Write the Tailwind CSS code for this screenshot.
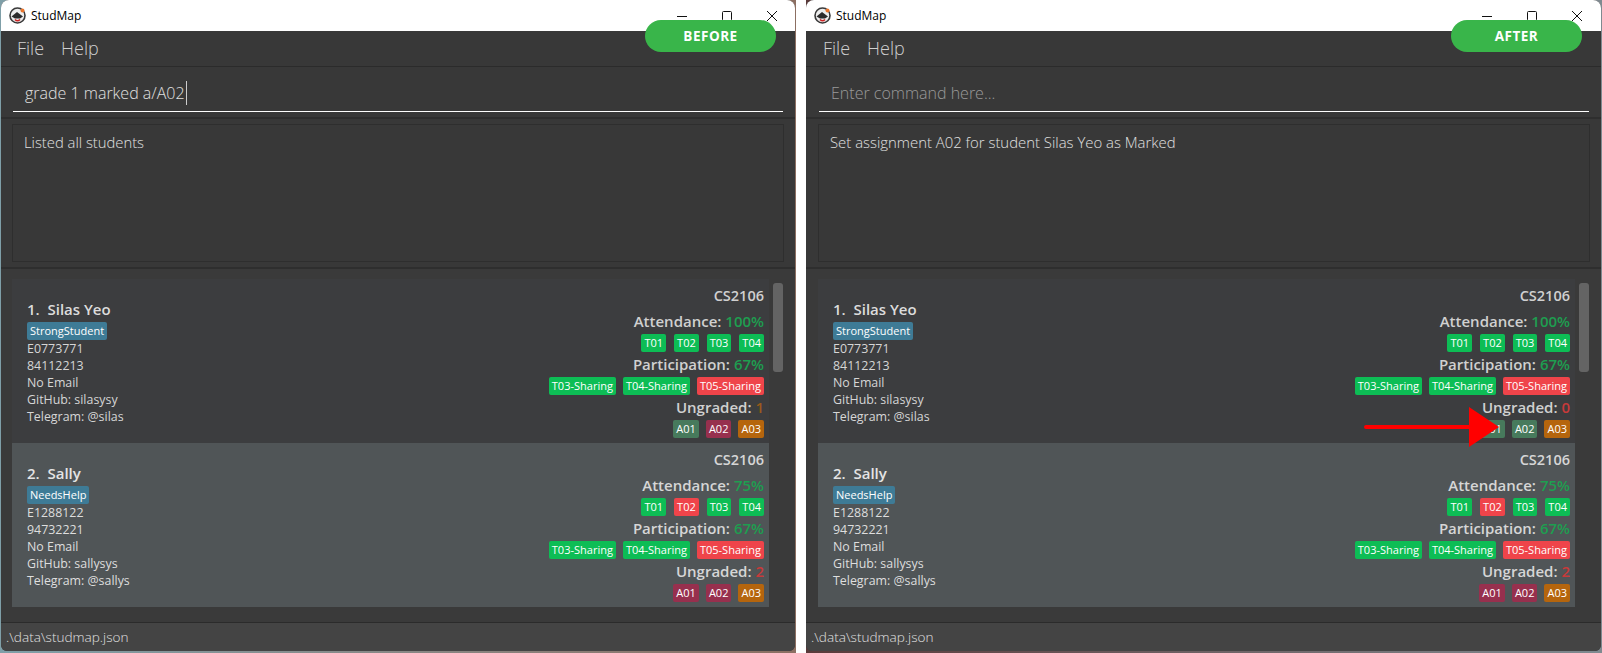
<!DOCTYPE html>
<html>
<head>
<meta charset="utf-8">
<script src="https://cdn.jsdelivr.net/npm/@tailwindcss/browser@4"></script>
</head>
<body class="bg-white overflow-hidden font-['Open_Sans','Noto_Sans',sans-serif]">
<div class="relative flex w-[1602px] h-[653px] gap-[10px] bg-white">

  <!-- LEFT -->
  <div class="relative w-[796px] h-[653px] pl-px pb-[2px] bg-gradient-to-r from-[#7f9fa8] to-[#8c6f62]">
    <div class="flex flex-col h-full w-[794px] rounded-t-[8px] rounded-b-[6px] overflow-hidden bg-[#383838]">
      <div class="flex items-center h-[31px] shrink-0 bg-white pl-[8px]">
        <svg class="w-[17px] h-[17px]" viewBox="0 0 17 17"><circle cx="8.5" cy="8.5" r="7.5" fill="#eee" stroke="#3a3a3a" stroke-width="1.6"/><path d="M2.5 9.5 8 5l6 4.5-3 2H6z" fill="#2b2b2b"/><path d="M6 12.5q2.5 2.5 5 0" fill="none" stroke="#c22" stroke-width="1.6"/><circle cx="13.5" cy="3.5" r="2" fill="#e8742c"/></svg>
        <span class="ml-[5px] text-[12px] text-black">StudMap</span>
        <div class="ml-auto flex items-center">
          <svg class="w-[12px] h-[12px]" viewBox="0 0 12 12"><path d="M1 6.5h10" stroke="#111" stroke-width="1"/></svg>
          <svg class="ml-[33px] w-[12px] h-[12px]" viewBox="0 0 12 12"><rect x="1.5" y="1.5" width="9" height="9" rx="1" fill="none" stroke="#111" stroke-width="1"/></svg>
          <svg class="ml-[33px] mr-[17px] w-[12px] h-[12px]" viewBox="0 0 12 12"><path d="M1 1l10 10M11 1 1 11" stroke="#111" stroke-width="1"/></svg>
        </div>
      </div>
      <div class="flex items-center gap-[17px] h-[36px] shrink-0 pl-[16px] text-[18px] font-light text-[#d0d0d0] border-b border-[#2b2b2b]">
        <span>File</span><span>Help</span>
      </div>
      <div class="h-[52px] shrink-0 px-[12px] pt-[10px] border-b-2 border-[#2e2e2e]">
        <div class="flex items-center h-[35px] pl-[12px] pb-[3px] border-b border-white text-[16px] font-light text-[#e0e0e0]">grade 1 marked a/A02<span class="w-px h-[24px] ml-px bg-[#cccccc]"></span></div>
      </div>
      <div class="h-[150px] shrink-0 px-[11px] pt-[5px] pb-[5px] border-b-2 border-[#2e2e2e]">
        <div class="h-full border border-[#2e2e2e] pl-[11px] pt-[7px] text-[14.8px] font-light leading-[20px] text-[#e0e0e0]">Listed all students</div>
      </div>
      <div class="relative h-[353px] shrink-0 pl-[11px] pt-[10px] overflow-hidden bg-[#3a3a3a]">
        <div class="absolute right-[12px] top-[14px] w-[10px] h-[89px] rounded-[3px] bg-[#646464]"></div>
        <div class="flex justify-between w-[757px] h-[164px] pl-[15px] pr-[5px] bg-[#3c3d3f]">
          <div class="pt-[20px] text-[12.4px] leading-[17px] text-[#d6d6d6]">
            <div class="h-[20px] text-[15px] leading-[20px] font-semibold text-[#dcdcdc]">1.&nbsp; Silas Yeo</div>
            <div class="flex mt-[3px]"><span class="h-[18px] px-[3px] rounded-[2px] bg-[#3e7b96] text-[11px] leading-[18px] text-white">StrongStudent</span></div>
            <div>E0773771</div><div>84112213</div><div>No Email</div><div>GitHub: silasysy</div><div>Telegram: @silas</div>
          </div>
          <div class="flex flex-col items-end pt-[7px] text-[#d0d0d0]">
            <div class="h-[20px] text-[14.5px] leading-[20px] font-semibold">CS2106</div>
            <div class="h-[22px] mt-[4px] text-[15px] leading-[22px] font-semibold">Attendance: <span class="text-[#1e9e50]">100%</span></div>
            <div class="flex gap-[8px] mt-[2px] text-[11px] leading-[18px] text-white">
              <span class="h-[18px] px-[3px] rounded-[2px] bg-[#0dbd55]">T01</span><span class="h-[18px] px-[3px] rounded-[2px] bg-[#0dbd55]">T02</span><span class="h-[18px] px-[3px] rounded-[2px] bg-[#0dbd55]">T03</span><span class="h-[18px] px-[3px] rounded-[2px] bg-[#0dbd55]">T04</span>
            </div>
            <div class="h-[22px] mt-[1px] text-[15px] leading-[22px] font-semibold">Participation: <span class="text-[#1e9e50]">67%</span></div>
            <div class="flex gap-[7px] mt-[2px] text-[11px] leading-[18px] text-white">
              <span class="h-[18px] px-[3px] rounded-[2px] bg-[#0dbd55]">T03-Sharing</span><span class="h-[18px] px-[3px] rounded-[2px] bg-[#0dbd55]">T04-Sharing</span><span class="h-[18px] px-[3px] rounded-[2px] bg-[#ef444a]">T05-Sharing</span>
            </div>
            <div class="h-[22px] mt-[1px] text-[15px] leading-[22px] font-semibold">Ungraded: <span class="text-[#9a5a1a]">1</span></div>
            <div class="flex gap-[7px] mt-[2px] text-[11px] leading-[18px] text-white">
              <span class="h-[18px] px-[3px] rounded-[2px] bg-[#477a5c]">A01</span><span class="h-[18px] px-[3px] rounded-[2px] bg-[#97304e]">A02</span><span class="h-[18px] px-[3px] rounded-[2px] bg-[#b5650d]">A03</span>
            </div>
          </div>
        </div>
        <div class="flex justify-between w-[757px] h-[164px] pl-[15px] pr-[5px] bg-[#505557]">
          <div class="pt-[20px] text-[12.4px] leading-[17px] text-[#dedede]">
            <div class="h-[20px] text-[15px] leading-[20px] font-semibold text-[#e4e4e4]">2.&nbsp; Sally</div>
            <div class="flex mt-[3px]"><span class="h-[18px] px-[3px] rounded-[2px] bg-[#3e7b96] text-[11px] leading-[18px] text-white">NeedsHelp</span></div>
            <div>E1288122</div><div>94732221</div><div>No Email</div><div>GitHub: sallysys</div><div>Telegram: @sallys</div>
          </div>
          <div class="flex flex-col items-end pt-[7px] text-[#d6d6d6]">
            <div class="h-[20px] text-[14.5px] leading-[20px] font-semibold">CS2106</div>
            <div class="h-[22px] mt-[4px] text-[15px] leading-[22px] font-semibold">Attendance: <span class="text-[#1e9e50]">75%</span></div>
            <div class="flex gap-[8px] mt-[2px] text-[11px] leading-[18px] text-white">
              <span class="h-[18px] px-[3px] rounded-[2px] bg-[#0dbd55]">T01</span><span class="h-[18px] px-[3px] rounded-[2px] bg-[#ef444a]">T02</span><span class="h-[18px] px-[3px] rounded-[2px] bg-[#0dbd55]">T03</span><span class="h-[18px] px-[3px] rounded-[2px] bg-[#0dbd55]">T04</span>
            </div>
            <div class="h-[22px] mt-[1px] text-[15px] leading-[22px] font-semibold">Participation: <span class="text-[#1e9e50]">67%</span></div>
            <div class="flex gap-[7px] mt-[2px] text-[11px] leading-[18px] text-white">
              <span class="h-[18px] px-[3px] rounded-[2px] bg-[#0dbd55]">T03-Sharing</span><span class="h-[18px] px-[3px] rounded-[2px] bg-[#0dbd55]">T04-Sharing</span><span class="h-[18px] px-[3px] rounded-[2px] bg-[#ef444a]">T05-Sharing</span>
            </div>
            <div class="h-[22px] mt-[1px] text-[15px] leading-[22px] font-semibold">Ungraded: <span class="text-[#c83a3a]">2</span></div>
            <div class="flex gap-[7px] mt-[2px] text-[11px] leading-[18px] text-white">
              <span class="h-[18px] px-[3px] rounded-[2px] bg-[#97304e]">A01</span><span class="h-[18px] px-[3px] rounded-[2px] bg-[#97304e]">A02</span><span class="h-[18px] px-[3px] rounded-[2px] bg-[#b5650d]">A03</span>
            </div>
          </div>
        </div>
      </div>
      <div class="flex-1 flex items-center pl-[5px] border-t border-[#2b2b2b] bg-[#444444] text-[13.6px] font-light text-[#e0e0e0]">.\data\studmap.json</div>
    </div>
    <div class="absolute left-[645px] top-[20px] flex items-center justify-center w-[131px] h-[32px] rounded-full bg-[#39b54a] text-[13.5px] font-bold tracking-[0.5px] text-white">BEFORE</div>
  </div>

  <!-- RIGHT -->
  <div class="relative w-[796px] h-[653px] pb-[2px] bg-gradient-to-r from-[#5a3a3a] to-[#7f8a90]">
    <div class="flex flex-col h-full w-[795px] rounded-t-[8px] rounded-b-[6px] overflow-hidden bg-[#383838]">
      <div class="flex items-center h-[31px] shrink-0 bg-white pl-[8px]">
        <svg class="w-[17px] h-[17px]" viewBox="0 0 17 17"><circle cx="8.5" cy="8.5" r="7.5" fill="#eee" stroke="#3a3a3a" stroke-width="1.6"/><path d="M2.5 9.5 8 5l6 4.5-3 2H6z" fill="#2b2b2b"/><path d="M6 12.5q2.5 2.5 5 0" fill="none" stroke="#c22" stroke-width="1.6"/><circle cx="13.5" cy="3.5" r="2" fill="#e8742c"/></svg>
        <span class="ml-[5px] text-[12px] text-black">StudMap</span>
        <div class="ml-auto flex items-center">
          <svg class="w-[12px] h-[12px]" viewBox="0 0 12 12"><path d="M1 6.5h10" stroke="#111" stroke-width="1"/></svg>
          <svg class="ml-[33px] w-[12px] h-[12px]" viewBox="0 0 12 12"><rect x="1.5" y="1.5" width="9" height="9" rx="1" fill="none" stroke="#111" stroke-width="1"/></svg>
          <svg class="ml-[33px] mr-[18px] w-[12px] h-[12px]" viewBox="0 0 12 12"><path d="M1 1l10 10M11 1 1 11" stroke="#111" stroke-width="1"/></svg>
        </div>
      </div>
      <div class="flex items-center gap-[17px] h-[36px] shrink-0 pl-[17px] text-[18px] font-light text-[#d0d0d0] border-b border-[#2b2b2b]">
        <span>File</span><span>Help</span>
      </div>
      <div class="h-[52px] shrink-0 pl-[13px] pr-[12px] pt-[10px] border-b-2 border-[#2e2e2e]">
        <div class="flex items-center h-[35px] pl-[12px] pb-[3px] border-b border-white text-[16px] font-light text-[#9a9a9a]">Enter command here...</div>
      </div>
      <div class="h-[150px] shrink-0 pl-[12px] pr-[11px] pt-[5px] pb-[5px] border-b-2 border-[#2e2e2e]">
        <div class="h-full border border-[#2e2e2e] pl-[11px] pt-[7px] text-[14.9px] font-light leading-[20px] text-[#e0e0e0]">Set assignment A02 for student Silas Yeo as Marked</div>
      </div>
      <div class="relative h-[353px] shrink-0 pl-[12px] pt-[10px] overflow-hidden bg-[#3a3a3a]">
        <div class="absolute right-[12px] top-[14px] w-[10px] h-[89px] rounded-[3px] bg-[#646464]"></div>
        <div class="flex justify-between w-[757px] h-[164px] pl-[15px] pr-[5px] bg-[#3c3d3f]">
          <div class="pt-[20px] text-[12.4px] leading-[17px] text-[#d6d6d6]">
            <div class="h-[20px] text-[15px] leading-[20px] font-semibold text-[#dcdcdc]">1.&nbsp; Silas Yeo</div>
            <div class="flex mt-[3px]"><span class="h-[18px] px-[3px] rounded-[2px] bg-[#3e7b96] text-[11px] leading-[18px] text-white">StrongStudent</span></div>
            <div>E0773771</div><div>84112213</div><div>No Email</div><div>GitHub: silasysy</div><div>Telegram: @silas</div>
          </div>
          <div class="flex flex-col items-end pt-[7px] text-[#d0d0d0]">
            <div class="h-[20px] text-[14.5px] leading-[20px] font-semibold">CS2106</div>
            <div class="h-[22px] mt-[4px] text-[15px] leading-[22px] font-semibold">Attendance: <span class="text-[#1e9e50]">100%</span></div>
            <div class="flex gap-[8px] mt-[2px] text-[11px] leading-[18px] text-white">
              <span class="h-[18px] px-[3px] rounded-[2px] bg-[#0dbd55]">T01</span><span class="h-[18px] px-[3px] rounded-[2px] bg-[#0dbd55]">T02</span><span class="h-[18px] px-[3px] rounded-[2px] bg-[#0dbd55]">T03</span><span class="h-[18px] px-[3px] rounded-[2px] bg-[#0dbd55]">T04</span>
            </div>
            <div class="h-[22px] mt-[1px] text-[15px] leading-[22px] font-semibold">Participation: <span class="text-[#1e9e50]">67%</span></div>
            <div class="flex gap-[7px] mt-[2px] text-[11px] leading-[18px] text-white">
              <span class="h-[18px] px-[3px] rounded-[2px] bg-[#0dbd55]">T03-Sharing</span><span class="h-[18px] px-[3px] rounded-[2px] bg-[#0dbd55]">T04-Sharing</span><span class="h-[18px] px-[3px] rounded-[2px] bg-[#ef444a]">T05-Sharing</span>
            </div>
            <div class="h-[22px] mt-[1px] text-[15px] leading-[22px] font-semibold">Ungraded: <span class="text-[#c83a3a]">0</span></div>
            <div class="flex gap-[7px] mt-[2px] text-[11px] leading-[18px] text-white">
              <span class="h-[18px] px-[3px] rounded-[2px] bg-[#477a5c]">A01</span><span class="h-[18px] px-[3px] rounded-[2px] bg-[#477a5c]">A02</span><span class="h-[18px] px-[3px] rounded-[2px] bg-[#b5650d]">A03</span>
            </div>
          </div>
        </div>
        <div class="flex justify-between w-[757px] h-[164px] pl-[15px] pr-[5px] bg-[#505557]">
          <div class="pt-[20px] text-[12.4px] leading-[17px] text-[#dedede]">
            <div class="h-[20px] text-[15px] leading-[20px] font-semibold text-[#e4e4e4]">2.&nbsp; Sally</div>
            <div class="flex mt-[3px]"><span class="h-[18px] px-[3px] rounded-[2px] bg-[#3e7b96] text-[11px] leading-[18px] text-white">NeedsHelp</span></div>
            <div>E1288122</div><div>94732221</div><div>No Email</div><div>GitHub: sallysys</div><div>Telegram: @sallys</div>
          </div>
          <div class="flex flex-col items-end pt-[7px] text-[#d6d6d6]">
            <div class="h-[20px] text-[14.5px] leading-[20px] font-semibold">CS2106</div>
            <div class="h-[22px] mt-[4px] text-[15px] leading-[22px] font-semibold">Attendance: <span class="text-[#1e9e50]">75%</span></div>
            <div class="flex gap-[8px] mt-[2px] text-[11px] leading-[18px] text-white">
              <span class="h-[18px] px-[3px] rounded-[2px] bg-[#0dbd55]">T01</span><span class="h-[18px] px-[3px] rounded-[2px] bg-[#ef444a]">T02</span><span class="h-[18px] px-[3px] rounded-[2px] bg-[#0dbd55]">T03</span><span class="h-[18px] px-[3px] rounded-[2px] bg-[#0dbd55]">T04</span>
            </div>
            <div class="h-[22px] mt-[1px] text-[15px] leading-[22px] font-semibold">Participation: <span class="text-[#1e9e50]">67%</span></div>
            <div class="flex gap-[7px] mt-[2px] text-[11px] leading-[18px] text-white">
              <span class="h-[18px] px-[3px] rounded-[2px] bg-[#0dbd55]">T03-Sharing</span><span class="h-[18px] px-[3px] rounded-[2px] bg-[#0dbd55]">T04-Sharing</span><span class="h-[18px] px-[3px] rounded-[2px] bg-[#ef444a]">T05-Sharing</span>
            </div>
            <div class="h-[22px] mt-[1px] text-[15px] leading-[22px] font-semibold">Ungraded: <span class="text-[#c83a3a]">2</span></div>
            <div class="flex gap-[7px] mt-[2px] text-[11px] leading-[18px] text-white">
              <span class="h-[18px] px-[3px] rounded-[2px] bg-[#97304e]">A01</span><span class="h-[18px] px-[3px] rounded-[2px] bg-[#97304e]">A02</span><span class="h-[18px] px-[3px] rounded-[2px] bg-[#b5650d]">A03</span>
            </div>
          </div>
        </div>
      </div>
      <div class="flex-1 flex items-center pl-[5px] border-t border-[#2b2b2b] bg-[#444444] text-[13.6px] font-light text-[#e0e0e0]">.\data\studmap.json</div>
    </div>
    <div class="absolute left-[645px] top-[20px] flex items-center justify-center w-[131px] h-[32px] rounded-full bg-[#39b54a] text-[13.5px] font-bold tracking-[0.5px] text-white">AFTER</div>
  </div>

  <!-- arrow overlay -->
  <svg class="absolute left-[1360px] top-[400px] w-[145px] h-[54px]" viewBox="0 0 145 54"><path d="M6 27h105" stroke="#ff0000" stroke-width="4" stroke-linecap="round"/><path d="M109 7l30 20-30 20z" fill="#ff0000"/></svg>
</div>
</body>
</html>
